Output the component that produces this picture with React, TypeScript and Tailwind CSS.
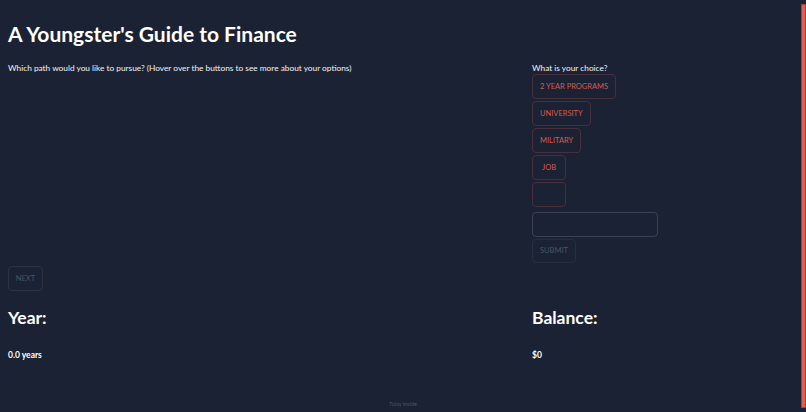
import React, { useState } from 'react';

const paths = ['2 Year Programs', 'University', 'Military', 'Job', ''];

const App: React.FC = () => {
    const [choice, setChoice] = useState('');
    const [year] = useState(0);
    const [balance] = useState(0);

    return (
        <div
            className="relative min-h-screen bg-[#1b2233] text-white"
            style={{ fontFamily: 'Lato, "Noto Sans", sans-serif' }}
        >
            <div className="px-2 pt-[21px] pb-[4px]">
                <h1 className="text-[21px] leading-[26px] font-bold">A Youngster's Guide to Finance</h1>

                <div className="flex mt-[15px]">
                    {/* Left: prompt */}
                    <div className="w-[524px]">
                        <p className="text-[8.3px] leading-[12px] text-gray-100">
                            Which path would you like to pursue? (Hover over the buttons to see more about your options)
                        </p>
                    </div>

                    {/* Right: choice list */}
                    <div className="flex flex-col items-start">
                        <p className="text-[8.3px] leading-[12px] text-gray-100">What is your choice?</p>
                        <div className="flex flex-col items-start gap-[2px]">
                            {paths.map((p, i) => (
                                <button
                                    key={i}
                                    onClick={() => setChoice(p)}
                                    className="h-[25px] min-w-[34px] px-[7px] rounded-[4px] border border-[#4a2e3c] text-[7.5px] text-[#d65a50] uppercase"
                                >
                                    {p}
                                </button>
                            ))}
                        </div>
                        <input
                            value={choice}
                            onChange={e => setChoice(e.target.value)}
                            className="mt-[5px] w-[126px] h-[25px] rounded-[4px] border border-[#3a4356] bg-transparent outline-none px-2 text-[9px]"
                        />
                        <button
                            disabled
                            className="mt-[2px] h-[24px] w-[44px] rounded-[4px] border border-[#262e3f] text-[7.5px] text-[#4b5466] uppercase"
                        >
                            Submit
                        </button>
                    </div>
                </div>

                <button
                    disabled
                    className="mt-[3px] w-[35px] h-[25px] rounded-[4px] border border-[#2b3344] text-[7.5px] text-[#4b5466] uppercase"
                >
                    Next
                </button>

                <div className="flex mt-[16px]">
                    <div className="w-[524px]">
                        <h2 className="text-[17.5px] leading-[22px] font-bold">Year:</h2>
                        <p className="mt-[20px] text-[8.5px] leading-[12px] font-bold">{year.toFixed(1)} years</p>
                    </div>
                    <div>
                        <h2 className="text-[17.5px] leading-[22px] font-bold">Balance:</h2>
                        <p className="mt-[20px] text-[8.5px] leading-[12px] font-bold">${balance}</p>
                    </div>
                </div>

                <footer className="mt-[40px] text-center text-[5.5px] leading-[7px] text-[#4b5466]">Tulay Inside</footer>
            </div>

            {/* page scrollbar */}
            <div className="fixed top-0 right-0 bottom-0 w-[6px] bg-[#1b2233] flex flex-col py-[4px]">
                <div className="flex-1 ml-[1px] w-[5px] bg-[#e0604f] border border-[#a2413a]" />
            </div>
        </div>
    );
};

export default App;
